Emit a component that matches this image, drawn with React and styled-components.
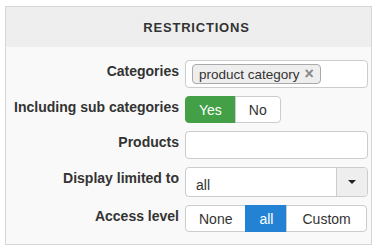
import React from 'react';
import styled, { createGlobalStyle } from 'styled-components';

const GlobalStyle = createGlobalStyle`
    body {
        margin: 0;
        background: #fff;
        font-family: 'Liberation Sans', Arial, sans-serif;
        color: #333;
    }
`;

const Panel = styled.div`
    margin: 6px 5px;
    width: 367px;
    box-sizing: border-box;
    border: 1px solid #d6d6d6;
    background: #f9f9f9;
`;

const Header = styled.div`
    height: 40px;
    display: flex;
    align-items: center;
    justify-content: center;
    padding-left: 16px;
    background: #eee;
    font-size: 13px;
    font-weight: 700;
    letter-spacing: 0.8px;
    color: #333;
`;

const Body = styled.div`
    display: grid;
    grid-template-columns: 173px 1fr;
    column-gap: 6px;
    row-gap: 8px;
    padding: 13px 3px 12px 0;
`;

const Label = styled.div`
    text-align: right;
    font-size: 14px;
    font-weight: 700;
    line-height: 16px;
    padding-top: ${(props) => props.$top || 3}px;
    color: #333;
    white-space: nowrap;
`;

const Input = styled.div`
    height: 28px;
    box-sizing: border-box;
    border: 1px solid #ccc;
    border-radius: 4px;
    background: #fff;
    display: flex;
    align-items: center;
    padding: 0 6px;
`;

const Tag = styled.span`
    display: inline-flex;
    align-items: center;
    height: 20px;
    box-sizing: border-box;
    padding: 0 6px 0 6px;
    border: 1px solid #aaa;
    border-radius: 4px;
    background: #eee;
    font-size: 13.5px;
    color: #333;
`;

const Remove = styled.span`
    margin-left: 5px;
    font-size: 16px;
    font-weight: 700;
    color: #888;
    line-height: 1;
`;

const Group = styled.div`
    display: flex;
    height: 27px;
    justify-self: start;
`;

const Toggle = styled.div`
    display: flex;
    align-items: center;
    padding: 0 ${(props) => props.$pad || 13}px;
    font-size: 14px;
    border: 1px solid ${(props) => (props.$active ? props.$color : '#ccc')};
    background: ${(props) => (props.$active ? props.$color : '#fff')};
    color: ${(props) => (props.$active ? '#fff' : '#333')};
    & + & {
        margin-left: -1px;
    }
    &:first-child {
        border-radius: 4px 0 0 4px;
    }
    &:last-child {
        border-radius: 0 4px 4px 0;
    }
`;

const Select = styled.div`
    height: 30px;
    box-sizing: border-box;
    border: 1px solid #ccc;
    border-radius: 4px;
    background: #fff;
    display: flex;
`;

const SelectValue = styled.div`
    flex: 1;
    display: flex;
    align-items: center;
    padding: 5px 10px 0;
    font-size: 14px;
    color: #333;
`;

const Caret = styled.div`
    width: 30px;
    border-left: 1px solid #ccc;
    background: #eee;
    border-radius: 0 3px 3px 0;
    display: flex;
    align-items: center;
    justify-content: center;
    &::after {
        content: '';
        border-left: 4px solid transparent;
        border-right: 4px solid transparent;
        border-top: 4px solid #222;
    }
`;

function App() {
    return (
        <>
            <GlobalStyle />
            <Panel>
                <Header>RESTRICTIONS</Header>
                <Body>
                    <Label>Categories</Label>
                    <Input>
                        <Tag>
                            product category<Remove>×</Remove>
                        </Tag>
                    </Input>

                    <Label>Including sub categories</Label>
                    <Group>
                        <Toggle $active $color="#43a047">Yes</Toggle>
                        <Toggle>No</Toggle>
                    </Group>

                    <Label>Products</Label>
                    <Input />

                    <Label $top={3}>Display limited to</Label>
                    <Select>
                        <SelectValue>all</SelectValue>
                        <Caret />
                    </Select>

                    <Label $top={3}>Access level</Label>
                    <Group>
                        <Toggle $pad={13}>None</Toggle>
                        <Toggle $active $color="#2382d4">all</Toggle>
                        <Toggle $pad={15}>Custom</Toggle>
                    </Group>
                </Body>
            </Panel>
        </>
    );
}

export default App;
